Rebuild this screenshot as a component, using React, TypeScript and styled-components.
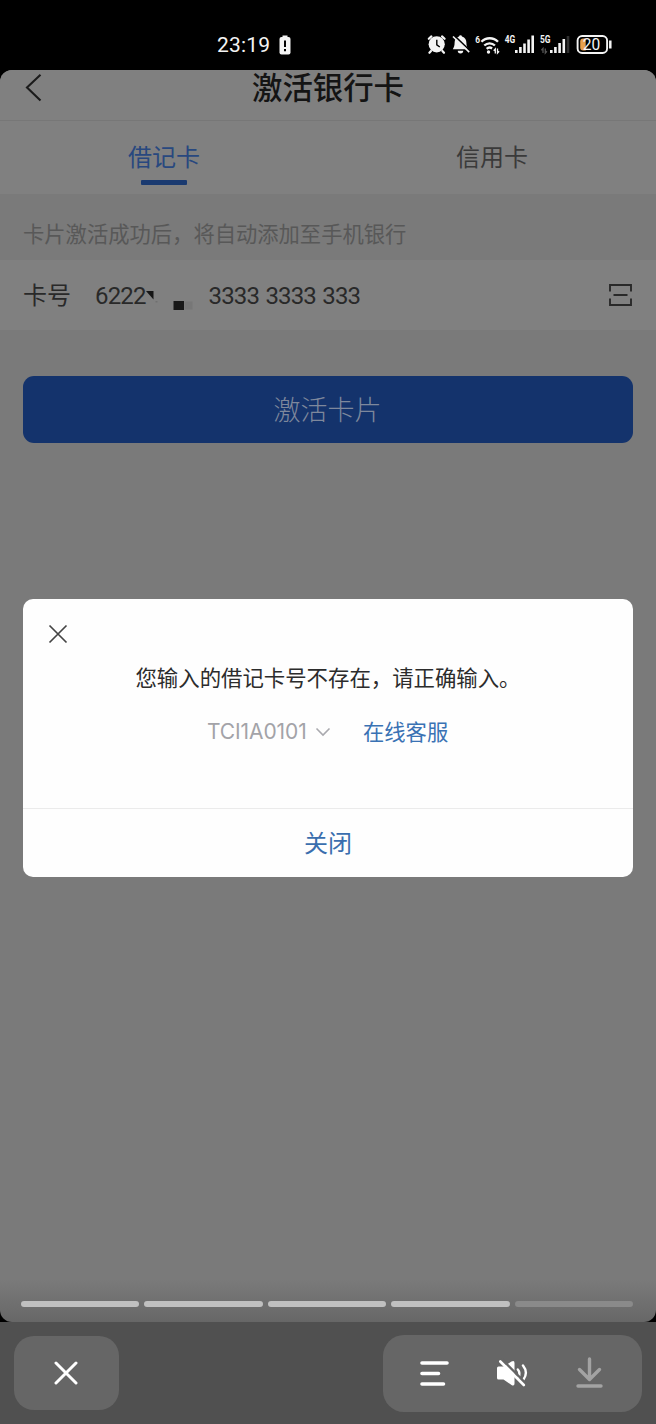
import React from "react";
import styled, { createGlobalStyle } from "styled-components";

const Global = createGlobalStyle`
  * { box-sizing: border-box; }
  body { margin: 0; background: #000; }
`;

const sans = `"Noto Sans CJK SC", sans-serif`;

const Phone = styled.div`
  width: 656px;
  height: 1424px;
  display: flex;
  flex-direction: column;
  background: #000;
  font-family: ${sans};
`;

const StatusBar = styled.div`
  height: 70px;
  padding: 20px 44px 0 217px;
  display: flex;
  align-items: center;
  justify-content: space-between;
  color: #f4f4f4;
`;

const Clock = styled.div`
  display: flex;
  align-items: center;
  gap: 8.5px;
  height: 50px;
  font: 400 21px/50px Roboto, sans-serif;
  letter-spacing: 0.2px;
`;

const Screen = styled.main`
  position: relative;
  height: 1252px;
  display: flex;
  flex-direction: column;
  background: linear-gradient(#7a7a7a 0, #7a7a7a 1210px, #676767 1252px);
  border-radius: 12px;
`;

const Header = styled.header`
  height: 51px;
  flex: none;
  display: grid;
  grid-template-columns: 68px 1fr 68px;
  background: #808080;
  border-bottom: 1px solid #777;
  border-radius: 12px 12px 0 0;
`;

const Back = styled.div`
  padding: 4px 0 0 25px;
`;

const Title = styled.h1`
  margin: 0;
  text-align: center;
  font-size: 30.4px;
  line-height: 32px;
  font-weight: 500;
  color: #141414;
`;

const Tabs = styled.nav`
  height: 73px;
  flex: none;
  display: grid;
  grid-template-columns: 1fr 1fr;
  background: #808080;
`;

const Tab = styled.div<{ $active?: boolean }>`
  display: flex;
  flex-direction: column;
  align-items: center;
  padding-top: 17px;
  font-size: 24px;
  line-height: 36px;
  color: ${(p) => (p.$active ? "#28487f" : "#3a3a3a")};
  &::after {
    content: "";
    width: 46px;
    height: 5px;
    margin-top: 6px;
    background: ${(p) => (p.$active ? "#1a3a70" : "transparent")};
    border-radius: 1px;
  }
`;

const Hint = styled.p`
  margin: 0;
  height: 66px;
  flex: none;
  padding: 6px 23px 0;
  font-size: 21.3px;
  line-height: 66px;
  color: #585858;
`;

const CardRow = styled.div`
  height: 70px;
  flex: none;
  display: flex;
  align-items: center;
  padding: 0 24px 0 23px;
  background: #808080;
  color: #292929;
`;

const Label = styled.span`
  width: 72px;
  padding-bottom: 4px;
  font-size: 24px;
`;

const Digits = styled.span`
  font: 400 24px/30px Roboto, sans-serif;
  letter-spacing: -0.85px;
  word-spacing: 1.2px;
  padding-top: 1px;
`;

const Redaction = styled.svg`
  width: 63px;
  height: 30px;
`;

const Scan = styled.svg`
  margin-left: auto;
`;

const Activate = styled.button`
  height: 67px;
  flex: none;
  margin: 45.5px 23px 0;
  padding: 0 1px 1px 0;
  border: 0;
  border-radius: 11px;
  background: #14336c;
  color: #7e889c;
  font: 300 27px/64px ${sans};
`;

const Dialog = styled.section`
  position: absolute;
  top: 529px;
  left: 23px;
  width: 610px;
  height: 278px;
  display: flex;
  flex-direction: column;
  background: #fefefe;
  border-radius: 10px;
`;

const DialogClose = styled.div`
  height: 56px;
  padding: 25px 0 0 25px;
  line-height: 0;
`;

const Message = styled.p`
  margin: 0;
  text-align: center;
  font-size: 21.4px;
  line-height: 43px;
  color: #2c2c2c;
`;

const Meta = styled.div`
  display: flex;
  align-items: center;
  height: 68px;
  padding-left: 184px;
`;

const Code = styled.span`
  font: 400 21px/30px Inter, sans-serif;
  letter-spacing: -0.1px;
  color: #a3a3a8;
  width: 108px;
`;

const Support = styled.a`
  margin: -4px 0 0 32px;
  font-size: 21.3px;
  color: #3a72b4;
`;

const DialogAction = styled.button`
  height: 69px;
  margin-top: auto;
  padding: 0 0 3px;
  border: 0;
  border-top: 1.5px solid #ebebeb;
  background: none;
  font: 400 24px/60px ${sans};
  color: #3a6eae;
`;

const Progress = styled.div`
  display: flex;
  gap: 5.4px;
  margin: auto 23px 15px 21px;
`;

const Segment = styled.i<{ $done: boolean }>`
  flex: 1;
  height: 6px;
  border-radius: 3px;
  background: ${(p) => (p.$done ? "#c0c0c0" : "#8a8a8a")};
`;

const Base = styled.div`
  height: 102px;
  display: flex;
  justify-content: space-between;
  align-items: flex-start;
  padding: 13px 14px 0;
  background: #505050;
`;

const CloseButton = styled.div`
  width: 105px;
  height: 74px;
  margin-top: 1px;
  padding-right: 1px;
  display: flex;
  align-items: center;
  justify-content: center;
  border-radius: 20px;
  background: #666;
`;

const Tools = styled.div`
  width: 259px;
  height: 77px;
  display: flex;
  align-items: center;
  padding: 0 0 1px 35px;
  gap: 46px;
  border-radius: 21px;
  background: #666;
`;

const StatusIcons = () => (
  <svg width="185" height="26" viewBox="427 32 185 26" fill="none" stroke="#f4f4f4">
    <g>
      <circle cx="436.7" cy="44.3" r="8.1" fill="#f4f4f4" stroke="none" />
      <path d="M428.8 38.8l2.6-2.4M444.6 38.8l-2.6-2.4M431 51l-1.600 1.800M442.400 51l1.600 1.800" strokeWidth="2.2" strokeLinecap="round" />
      <path d="M436.800 39.800v5l3 2.200" stroke="#000" strokeWidth="1.400" />
    </g>
    <g>
      <path d="M460.500 35.200q-1.300 0-1.500 1.300c-3.200 1-4.400 3.500-4.400 6.300 0 3-.6 4.200-1.800 6.400h15.400c-1.200-2.200-1.800-3.400-1.800-6.400 0-2.800-1.200-5.300-4.400-6.300q-.2-1.300-1.500-1.300z" fill="#f4f4f4" stroke="none" />
      <path d="M457.800 50.800h5.400a2.700 2.600 0 0 1-5.400 0z" fill="#f4f4f4" stroke="none" />
      <path d="M454.400 35.600l16 15.500" stroke="#000" strokeWidth="1.500" />
      <path d="M453 36.500l16.200 15.600" strokeWidth="1.600" />
    </g>
    <g strokeWidth="2.300">
      <path d="M481.400 41.800a11.500 11.500 0 0 1 16.600 0" />
      <path d="M484.300 45.500a7.500 7.500 0 0 1 10.600 0" />
      <path d="M486.700 48.900a4.200 4.200 0 0 1 5.400-.4" />
      <circle cx="488.500" cy="52" r="1.700" fill="#f4f4f4" stroke="none" />
      <path d="M495.300 53.500v-4.500l-1.600 1.800M497.500 48.500v4.500l1.600-1.800" strokeWidth="1.300" />
    </g>
    <g strokeWidth="2.600">
      <path d="M516.300 53v-3M520.400 53v-6M524.500 53v-9.500M528.600 53v-13.500M532.700 53v-17.500" />
      <path d="M551.300 53v-3M555.400 53v-6M559.600 53v-10M563.800 53v-14" />
      <path d="M568 53v-17" stroke="#303030" />
      <path d="M543 53v-4.500l-1.600 1.800M545.300 48.500v4.500l1.600-1.800" stroke="#555" strokeWidth="1.300" />
    </g>
    <rect x="577.600" y="36" width="29.500" height="17" rx="4.500" strokeWidth="1.900" />
    <path d="M580.200 41.500q0-3 3-3h2.500v12h-2.500q-3 0-3-3z" fill="#e9a04c" stroke="none" />
    <path d="M610.300 40.500v8" strokeWidth="2.500" />
    <g fill="#f4f4f4" stroke="none" fontFamily="Roboto, sans-serif">
      <text x="475.300" y="42.500" fontSize="9.500" fontWeight="700" textLength="4.800" lengthAdjust="spacingAndGlyphs">6</text>
      <text x="504.800" y="43.300" fontSize="10" fontWeight="700" textLength="10.500" lengthAdjust="spacingAndGlyphs">4G</text>
      <text x="540" y="43.300" fontSize="10" fontWeight="700" textLength="10.500" lengthAdjust="spacingAndGlyphs">5G</text>
      <text x="582.700" y="50.400" fontSize="16.500" textLength="17.500" lengthAdjust="spacingAndGlyphs">20</text>
    </g>
  </svg>
);

const BatteryAlert = () => (
  <svg width="12" height="20" viewBox="0 0 12 20">
    <path d="M3.500 0.500h5v1.500h-5z" fill="#f4f4f4" />
    <rect x="0.500" y="2" width="11" height="17.500" rx="2" fill="#f4f4f4" />
    <path d="M6 5.500v6.500M6 14v2.200" stroke="#000" strokeWidth="2" />
  </svg>
);

export default function App() {
  return (
    <Phone>
      <Global />
      <StatusBar>
        <Clock>
          23:19
          <BatteryAlert />
        </Clock>
        <StatusIcons />
      </StatusBar>
      <Screen>
        <Header>
          <Back>
            <svg width="18" height="28" viewBox="0 0 18 28" fill="none" stroke="#1b1b1b" strokeWidth="2.100">
              <path d="M15.500 0.800L2 13.500l13.500 13" />
            </svg>
          </Back>
          <Title>激活银行卡</Title>
        </Header>
        <Tabs>
          <Tab $active>借记卡</Tab>
          <Tab>信用卡</Tab>
        </Tabs>
        <Hint>卡片激活成功后，将自动添加至手机银行</Hint>
        <CardRow>
          <Label>卡号</Label>
          <Digits>6222</Digits>
          <Redaction viewBox="145 281 63 30">
            <path d="M145 292h7.500v8.500z" fill="#151515" />
            <path d="M154.500 302h2v1.500h-2z" fill="#707070" />
            <path d="M172.500 302h10.500v10h-10.500z" fill="#181818" />
            <path d="M183.500 302.500h8v8h-8z" fill="#777" />
          </Redaction>
          <Digits>3333 3333 333</Digits>
          <Scan width="23" height="22" viewBox="0 0 23 22" fill="none" stroke="#292929" strokeWidth="1.900">
            <path d="M1 7.500V1h21v6.500M1 14.500V21h21v-6.500M4.500 11h14" />
          </Scan>
        </CardRow>
        <Activate>激活卡片</Activate>
        <Progress>
          {[true, true, true, true, false].map((done, i) => (
            <Segment key={i} $done={done} />
          ))}
        </Progress>
        <Dialog>
          <DialogClose>
            <svg width="20" height="20" viewBox="0 0 20 20" stroke="#444" strokeWidth="1.700">
              <path d="M1.500 1.500l17 17M18.500 1.500l-17 17" />
            </svg>
          </DialogClose>
          <Message>您输入的借记卡号不存在，请正确输入。</Message>
          <Meta>
            <Code>TCI1A0101</Code>
            <svg width="16" height="10" viewBox="0 0 16 10" fill="none" stroke="#a9a9ae" strokeWidth="1.600">
              <path d="M1.500 1.500L8 8l6.500-6.500" />
            </svg>
            <Support>在线客服</Support>
          </Meta>
          <DialogAction>关闭</DialogAction>
        </Dialog>
      </Screen>
      <Base>
        <CloseButton>
          <svg width="24" height="24" viewBox="0 0 24 24" stroke="#fff" strokeWidth="3" strokeLinecap="round">
            <path d="M2 2l20 20M22 2L2 22" />
          </svg>
        </CloseButton>
        <Tools>
          <svg width="32" height="30" viewBox="419 1358 32 30" stroke="#fff" strokeWidth="3.600" strokeLinecap="round">
            <path d="M423 1363h25M423 1373.500h16.500M423 1384h21.500" />
          </svg>
          <svg width="32" height="30" viewBox="497 1358 32 30" fill="none" stroke="#fff" strokeLinecap="round">
            <path d="M498 1368q0-1.500 1.500-1.500h5l8-5q3-1.500 3 1.500v20.500q0 3-3 1.500l-8-5.500h-5q-1.500 0-1.500-1.500z" fill="#fff" stroke="none" />
            <path d="M518.800 1369.500q3 3.500 .5 8.500" strokeWidth="2.400" />
            <path d="M524 1365.500q5.500 7 .5 14" strokeWidth="2.400" />
            <path d="M503 1359.500l24 24" stroke="#666" strokeWidth="2.400" />
            <path d="M501.300 1361.500l23.500 23.500" strokeWidth="2.600" />
          </svg>
          <svg width="30" height="34" viewBox="574 1356 30 34" fill="none" stroke="#a3a3a3" strokeWidth="3.400" strokeLinecap="round" strokeLinejoin="round">
            <path d="M589.500 1359v20M579.500 1369.500l10 10 10-10M578 1386h23" />
          </svg>
        </Tools>
      </Base>
    </Phone>
  );
}
